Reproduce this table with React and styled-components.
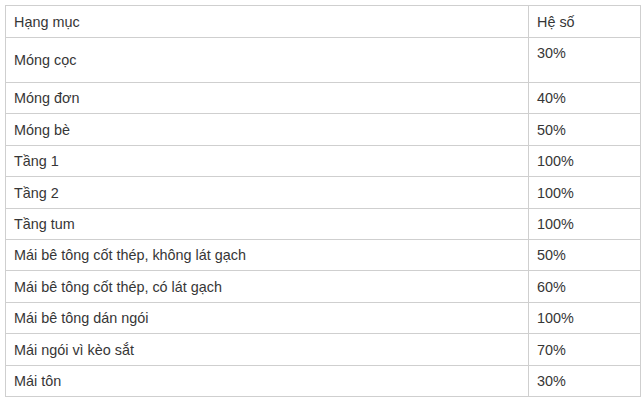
import styled, { createGlobalStyle } from 'styled-components';

const GlobalStyle = createGlobalStyle`
  html, body {
    margin: 0;
    padding: 0;
    background: #fff;
  }
  body {
    font-family: 'Liberation Sans', Arial, sans-serif;
  }
`;

const Page = styled.div`
  padding: 5px;
`;

const Table = styled.table`
  width: 636px;
  border-collapse: collapse;
  table-layout: fixed;
  color: #363636;
  font-size: 14.4px;
`;

const Row = styled.tr`
  height: ${(p) => p.$h}px;
`;

const Cell = styled.td`
  border: 1px solid #cfcfcf;
  padding: 0 8px;
  vertical-align: ${(p) => (p.$top ? 'top' : 'middle')};
  padding-top: ${(p) => (p.$top ? '5px' : '0')};
  line-height: 20px;
  white-space: nowrap;
`;

const rows = [
  ['Móng đơn', '40%'],
  ['Móng bè', '50%'],
  ['Tầng 1', '100%'],
  ['Tầng 2', '100%'],
  ['Tầng tum', '100%'],
  ['Mái bê tông cốt thép, không lát gạch', '50%'],
  ['Mái bê tông cốt thép, có lát gạch', '60%'],
  ['Mái bê tông dán ngói', '100%'],
  ['Mái ngói vì kèo sắt', '70%'],
  ['Mái tôn', '30%'],
];

export default function App() {
  return (
    <Page>
      <GlobalStyle />
      <Table>
        <colgroup>
          <col style={{ width: 523 }} />
          <col />
        </colgroup>
        <tbody>
          <Row $h={32}>
            <Cell>Hạng mục</Cell>
            <Cell>Hệ số</Cell>
          </Row>
          <Row $h={45}>
            <Cell>Móng cọc</Cell>
            <Cell $top>30%</Cell>
          </Row>
          {rows.map(([name, value], i) => (
            <Row key={name} $h={i % 5 === 1 || i % 5 === 3 ? 32 : 31}>
              <Cell>{name}</Cell>
              <Cell>{value}</Cell>
            </Row>
          ))}
        </tbody>
      </Table>
    </Page>
  );
}
